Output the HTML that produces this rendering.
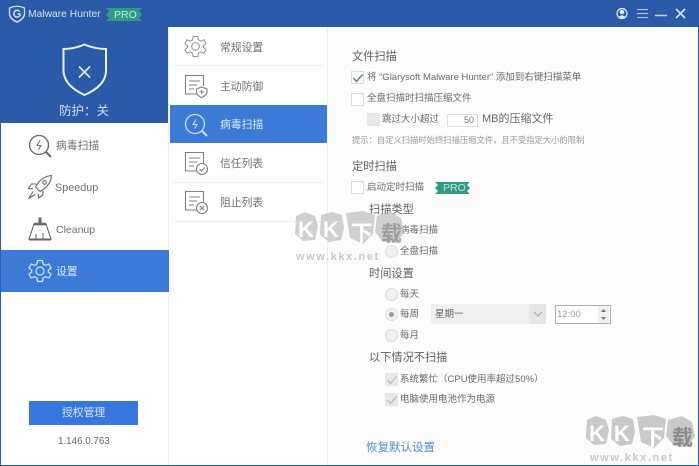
<!DOCTYPE html>
<html><head><meta charset="utf-8">
<style>
html,body{margin:0;padding:0}
body{width:699px;height:466px;overflow:hidden;position:relative;background:#fff;font-family:"Liberation Sans","Noto Sans CJK SC",sans-serif;color:#666}
#w{position:absolute;left:0;top:0;width:699px;height:466px;filter:blur(.35px)}
.a{position:absolute;white-space:nowrap;line-height:1}
.t{font-size:9.5px;color:#6a6a6a}
.h{font-size:11.2px;color:#606060}
.cb{position:absolute;width:11px;height:11px;background:#fff;border:1px solid #dcdcdc;box-sizing:content-box}
.cd{background:#e8e8e8;border-color:#e6e6e6}
.r{position:absolute;width:11px;height:11px;border-radius:50%;background:#f1f1f1;border:1px solid #dadada}
.nl{font-size:10.8px;color:#707070}
.sep{position:absolute;left:173px;width:150px;height:1px;background:#f0f0f0}
.wt{position:absolute;font:bold 11px "Liberation Sans",sans-serif;letter-spacing:1.6px;color:#c8c8c8;white-space:nowrap;line-height:1}
svg{position:absolute;overflow:visible}
</style></head>
<body><div id="w">
<!-- frame -->
<div class="a" style="left:0;top:0;width:699px;height:27px;background:#2b5aa9"></div>
<div class="a" style="left:0;top:0;width:169px;height:123px;background:#2b5aa9"></div>
<div class="a" style="left:0;top:0;width:1px;height:466px;background:#2b5aa9"></div>
<div class="a" style="left:698px;top:0;width:1px;height:466px;background:#2b5aa9"></div>
<div class="a" style="left:0;top:465px;width:699px;height:1px;background:#2b5aa9"></div>
<div class="a" style="left:328px;top:27px;width:370px;height:438px;background:#fcfcfc"></div>
<div class="a" style="left:327px;top:27px;width:1px;height:438px;background:#eeeeee"></div>
<div class="a" style="left:168px;top:27px;width:1px;height:438px;background:#eeeeee"></div>

<!-- logo -->
<svg style="left:8px;top:5px" width="18" height="18" viewBox="0 0 18 18" fill="none" stroke="#d8e4f5"><path d="M1.5 3 Q9 -.5 16.5 3 V9 Q16 14 9 17 Q2 14 1.5 9Z" stroke-width="1.3"/><path d="M12 6.5 Q9 4 6.5 6.5 Q5 9.5 7 11.5 Q10 13 12 10.5 V9 H9.5" stroke-width="1.4"/></svg>
<div class="a" style="left:28px;top:10px;font-size:10.3px;color:#d6e1f2">Malware Hunter</div>
<svg style="left:106px;top:8px" width="36" height="13" viewBox="0 0 36 13"><path d="M0 0H36L33 3 36 6.500 33 10 36 13H0L3 10 0 6.500 3 3Z" fill="#2f9c88"/></svg>
<div class="a" style="left:114px;top:10px;font-size:10.5px;color:#c7e6dc">PRO</div>

<!-- window icons -->
<svg style="left:615px;top:6px" width="76" height="15" viewBox="0 0 76 15"><circle cx="7" cy="7.500" r="5" fill="none" stroke="#dfe8f6" stroke-width="1.200"/><circle cx="7" cy="6" r="2.300" fill="#dfe8f6"/><path d="M3.500 11 Q7 7.500 10.500 11 L7 12.500Z" fill="#dfe8f6"/><path d="M22 3.500H33M22 7.500H33M22 11.500H33" stroke="#b8cbe8" stroke-width="1.100"/><path d="M40 9.500H52" stroke="#c6d6ec" stroke-width="1.500"/><path d="M61 3L70 12M70 3L61 12" stroke="#d9e4f4" stroke-width="1.600"/></svg>

<!-- shield -->
<svg style="left:62px;top:43px" width="46" height="54" viewBox="0 0 46 54" fill="none" stroke="#e9f0fa"><path d="M1.500 6 Q12 6 22.500 1.500 Q33 6 44 6 V29 Q43 43 22.500 52 Q3 43 1.500 29Z" stroke-width="2"/><path d="M17 23.500L28 34.500M28 23.500L17 34.500" stroke-width="1.600"/></svg>
<div class="a" style="left:59px;top:105px;font-size:12.500px;color:#d2def0">防护：关</div>

<!-- left nav -->
<svg style="left:28px;top:134px" width="25" height="25" viewBox="0 0 25 25" fill="none" stroke="#666"><circle cx="11" cy="11" r="9.500" stroke-width="1.300"/><path d="M12 6.500L9 11.500H13L10.500 15.500" stroke-width="1"/><path d="M18 18L23 23" stroke-width="2"/></svg>
<div class="a nl" style="left:56px;top:141px">病毒扫描</div>
<svg style="left:27px;top:174px" width="26" height="26" viewBox="0 0 26 26" fill="none" stroke="#666" stroke-width="1.100"><path d="M24.500 1.500C18 2 12 6 8.500 13L13 17.500C20 14 24 8 24.500 1.500Z"/><circle cx="17.500" cy="8.500" r="1.800"/><path d="M9 10H4.500L1.500 14.500 6 14.800M16 17V21L11.500 24 11 19.500"/><path d="M6 17.500L2 24 8.500 20.500"/></svg>
<div class="a nl" style="left:55px;top:183px;font-size:10.8px">Speedup</div>
<svg style="left:28px;top:217px" width="24" height="24" viewBox="0 0 24 24" fill="none" stroke="#666"><path d="M11 1H13V6H11Z" fill="#666"/><path d="M6 7H18" stroke-width="2.500"/><path d="M6 7L1 22H23L18 7" stroke-width="1.100"/><path d="M1 22.500H23" stroke-width="2"/><path d="M8 22V17M15 22V16" stroke-width="1"/></svg>
<div class="a nl" style="left:56px;top:225px;font-size:10.5px">Cleanup</div>
<div class="a" style="left:1px;top:250px;width:168px;height:42px;background:#3b7bd7"></div>
<svg style="left:28px;top:259px" width="24" height="24" viewBox="0 0 24 24" fill="none" stroke="#d5e4f8" stroke-width="1.200"><path d="M9.500 1.500H14.500L15 5 17.500 6.400 20.800 5 23 9 20.300 11 20.300 13 23 15 20.800 19 17.500 17.600 15 19 14.500 22.500H9.500L9 19 6.500 17.600 3.200 19 1 15 3.700 13V11L1 9 3.200 5 6.500 6.400 9 5Z"/><circle cx="12" cy="12" r="4"/></svg>
<div class="a nl" style="left:56px;top:267px;color:#dce8f8">设置</div>

<div class="a" style="left:29px;top:401px;width:109px;height:24px;background:#3577de"></div>
<div class="a" style="left:62px;top:408px;font-size:10.800px;color:#d9e6fa">授权管理</div>
<div class="a" style="left:58px;top:437px;font-size:9.800px;color:#666">1.146.0.763</div>

<!-- second nav -->
<svg style="left:184px;top:35px" width="23" height="23" viewBox="0 0 24 24" fill="none" stroke="#8a8a8a" stroke-width="1"><path d="M9.500 1.500H14.500L15 5 17.500 6.400 20.800 5 23 9 20.300 11 20.300 13 23 15 20.800 19 17.500 17.600 15 19 14.500 22.500H9.500L9 19 6.500 17.600 3.200 19 1 15 3.700 13V11L1 9 3.200 5 6.500 6.400 9 5Z"/><circle cx="12" cy="12" r="4"/></svg>
<div class="a nl" style="left:220px;top:43px">常规设置</div>
<div class="sep" style="top:65px"></div>
<svg style="left:184px;top:74px" width="24" height="24" viewBox="0 0 24 24" fill="none" stroke="#808080" stroke-width="1.100"><path d="M13 20H1.500V1.500H19.500V12"/><path d="M5 7H16M5 11H13M5 15H10"/><path d="M17.500 13L23 15V18.500Q22.500 21.500 17.500 23.500 13 21.500 12.500 18.500V15Z" fill="#fff"/><path d="M15.500 18H20M17.700 16V20" stroke-width=".9"/></svg>
<div class="a nl" style="left:220px;top:82px">主动防御</div>
<div class="a" style="left:170px;top:105px;width:157px;height:38px;background:#3b7bd7"></div>
<svg style="left:184px;top:113px" width="25" height="25" viewBox="0 0 25 25" fill="none" stroke="#cfe0f7"><circle cx="11" cy="11" r="9.500" stroke-width="1.300"/><path d="M12 6.500L9 11.500H13L10.500 15.500" stroke-width="1"/><path d="M18 18L23 23" stroke-width="2"/></svg>
<div class="a nl" style="left:220px;top:120px;color:#dce8f8">病毒扫描</div>
<svg style="left:184px;top:151px" width="24" height="24" viewBox="0 0 24 24" fill="none" stroke="#808080" stroke-width="1.100"><path d="M13 20H1.500V1.500H19.500V12"/><path d="M5 7H16M5 11H13M5 15H10"/><circle cx="18" cy="18" r="5.500" fill="#fff"/><path d="M15.500 18L17.500 20 20.700 16.300"/></svg>
<div class="a nl" style="left:220px;top:159px">信任列表</div>
<div class="sep" style="top:182px"></div>
<svg style="left:184px;top:190px" width="24" height="24" viewBox="0 0 24 24" fill="none" stroke="#808080" stroke-width="1.100"><path d="M13 20H1.500V1.500H19.500V12"/><path d="M5 7H16M5 11H13M5 15H10"/><circle cx="18" cy="18" r="5.500" fill="#fff"/><path d="M16 16L20 20M20 16L16 20"/></svg>
<div class="a nl" style="left:220px;top:198px">阻止列表</div>
<div class="sep" style="top:221px"></div>

<!-- settings -->
<div class="a h" style="left:352px;top:52px">文件扫描</div>
<div class="cb" style="left:351px;top:71px"></div>
<svg style="left:352px;top:72px" width="12" height="12" viewBox="0 0 12 12" fill="none" stroke="#4b9a55" stroke-width="1.500"><path d="M1.500 6L4.500 9.500 10.500 2.500"/></svg>
<div class="a t" style="left:367px;top:73px">将 “Glarysoft Malware Hunter” 添加到右键扫描菜单</div>
<div class="cb" style="left:351px;top:93px"></div>
<div class="a t" style="left:367px;top:94px">全盘扫描时扫描压缩文件</div>
<div class="cb cd" style="left:367px;top:113px"></div>
<div class="a t" style="left:382px;top:115px">跳过大小超过</div>
<div class="a" style="left:447px;top:114px;width:29px;height:11px;background:#fff;border:1px solid #dcdcdc"></div>
<div class="a" style="left:464px;top:116px;font-size:9px;color:#777">50</div>
<div class="a" style="left:482px;top:114px;font-size:11px;color:#666">MB的压缩文件</div>
<div class="a" style="left:352px;top:136px;font-size:8.300px;color:#9a9a9a">提示：自定义扫描时始终扫描压缩文件，且不受指定大小的限制</div>
<div class="a h" style="left:352px;top:162px">定时扫描</div>
<div class="cb" style="left:351px;top:181px"></div>
<div class="a t" style="left:367px;top:183px">启动定时扫描</div>
<svg style="left:435px;top:182px" width="35" height="12" viewBox="0 0 35 12"><path d="M0 0H35L32 3 35 6 32 9 35 12H0L3 9 0 6 3 3Z" fill="#2f9c88"/></svg>
<div class="a" style="left:443px;top:183px;font-size:10.500px;color:#c7e6dc">PRO</div>

<div class="a h" style="left:369px;top:205px">扫描类型</div>
<div class="r" style="left:385px;top:224px"></div>
<div class="a t" style="left:400px;top:226px">病毒扫描</div>
<div class="r" style="left:385px;top:245px"></div>
<div class="a t" style="left:400px;top:247px">全盘扫描</div>
<div class="a h" style="left:369px;top:269px">时间设置</div>
<div class="r" style="left:385px;top:288px"></div>
<div class="a t" style="left:400px;top:290px">每天</div>
<div class="r" style="left:385px;top:308px"></div>
<div class="a" style="left:389px;top:312px;width:5px;height:5px;border-radius:50%;background:#9a9a9a"></div>
<div class="a t" style="left:400px;top:310px">每周</div>
<div class="a" style="left:431px;top:304px;width:115px;height:20px;background:#f0f0f0"></div>
<div class="a" style="left:529px;top:304px;width:17px;height:20px;background:#e6e6e6"></div>
<svg style="left:533px;top:311px" width="10" height="6" viewBox="0 0 10 6" fill="none" stroke="#b5b5b5" stroke-width="1.300"><path d="M1 1L5 5 9 1"/></svg>
<div class="a" style="left:435px;top:310px;font-size:9.500px;color:#666">星期一</div>
<div class="a" style="left:555px;top:305px;width:54px;height:17px;background:#fff;border:1px solid #b0b0b0"></div>
<div class="a" style="left:557px;top:310px;font-size:9.500px;color:#999">12:00</div>
<div class="a" style="left:598px;top:306px;width:11px;height:17px;background:#efefef"></div>
<svg style="left:600px;top:309px" width="7" height="11" viewBox="0 0 7 11" fill="#777"><path d="M3.500 0L6 3H1ZM3.500 11L6 8H1Z"/></svg>
<div class="a t" style="left:400px;top:331px">每月</div>
<div class="r" style="left:385px;top:329px"></div>
<div class="a h" style="left:369px;top:353px">以下情况不扫描</div>
<div class="cb cd" style="left:385px;top:373px"></div>
<svg style="left:386px;top:374px" width="12" height="12" viewBox="0 0 12 12" fill="none" stroke="#bdbdbd" stroke-width="1.300"><path d="M1.500 6L4.500 9.500 10.500 2.500"/></svg>
<div class="a t" style="left:400px;top:375px">系统繁忙（CPU使用率超过50%）</div>
<div class="cb cd" style="left:385px;top:393px"></div>
<svg style="left:386px;top:394px" width="12" height="12" viewBox="0 0 12 12" fill="none" stroke="#bdbdbd" stroke-width="1.300"><path d="M1.500 6L4.500 9.500 10.500 2.500"/></svg>
<div class="a t" style="left:400px;top:395px">电脑使用电池作为电源</div>
<div class="a" style="left:366px;top:443px;font-size:11.500px;color:#4f8ed8">恢复默认设置</div>

<!-- watermarks -->
<svg style="left:293px;top:210px" width="112" height="36" viewBox="0 0 112 36" fill="#c9c9c9" fill-opacity=".88"><path d="M3 6L12 2 22 6 25 16 22 30 10 31 2 24Z"/><path d="M28 5L39 2 49 5 51 18 48 30 36 32 27 25Z"/><path d="M53 3L70 1 82 5 80 24 70 34 57 28Z"/><path d="M84 6L98 2 108 8 111 22 104 33 90 32 82 22Z"/></svg>
<div class="a" style="left:298px;top:217px;font:bold 22px 'Liberation Sans',sans-serif;color:#fff;letter-spacing:9px">KK</div>
<div class="a" style="left:351px;top:216px;font:bold 22px 'Noto Sans CJK SC',sans-serif;color:#fff">下</div>
<div class="a" style="left:381px;top:218px;font:bold 21px 'Noto Sans CJK SC',sans-serif;color:#8a8a8a;opacity:.7">载</div>
<div class="wt" style="left:296px;top:252px">www.kkx.net</div>
<svg style="left:584px;top:414px" width="112" height="36" viewBox="0 0 112 36" fill="#c9c9c9"><path d="M3 6L12 2 22 6 25 16 22 30 10 31 2 24Z"/><path d="M28 5L39 2 49 5 51 18 48 30 36 32 27 25Z"/><path d="M53 3L70 1 82 5 80 24 70 34 57 28Z"/><path d="M84 6L98 2 108 8 111 22 104 33 90 32 82 22Z"/></svg>
<div class="a" style="left:589px;top:421px;font:bold 22px 'Liberation Sans',sans-serif;color:#fff;letter-spacing:9px">KK</div>
<div class="a" style="left:642px;top:420px;font:bold 22px 'Noto Sans CJK SC',sans-serif;color:#fff">下</div>
<div class="a" style="left:672px;top:422px;font:bold 21px 'Noto Sans CJK SC',sans-serif;color:#8a8a8a">载</div>
<div class="wt" style="left:590px;top:453px">www.kkx.net</div>
</div></body></html>
